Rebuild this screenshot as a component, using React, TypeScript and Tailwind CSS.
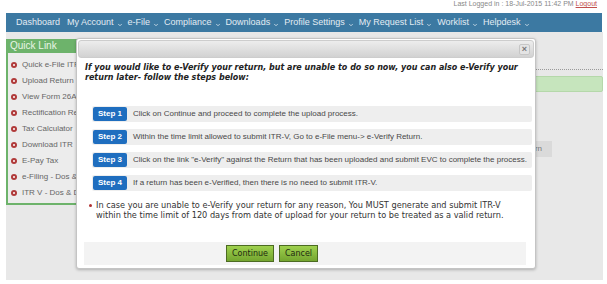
import { ChevronDown } from 'lucide-react'

const menu = ['My Account', 'e-File', 'Compliance', 'Downloads', 'Profile Settings', 'My Request List', 'Worklist', 'Helpdesk']

const links = [
  'Quick e-File ITR',
  'Upload Return',
  'View Form 26AS',
  'Rectification Request',
  'Tax Calculator',
  'Download ITR',
  'E-Pay Tax',
  "e-Filing - Dos & Don'ts",
  "ITR V - Dos & Don'ts",
]

const steps = [
  'Click on Continue and proceed to complete the upload process.',
  'Within the time limit allowed to submit ITR-V, Go to e-File menu-> e-Verify Return.',
  'Click on the link "e-Verify" against the Return that has been uploaded and submit EVC to complete the process.',
  'If a return has been e-Verified, then there is no need to submit ITR-V.',
]

export default function App() {
  return (
    <div className="relative w-[607px] h-[284px] overflow-hidden bg-white font-['Liberation_Sans',Arial,sans-serif]">
      {/* Top strip */}
      <div className="h-[13px] flex justify-end pr-[10px]">
        <div className="text-[7px] leading-[8px] text-[#888]">
          Last Logged in : 18-Jul-2015 11:42 PM <span className="text-[#c0504d] underline">Logout</span>
        </div>
      </div>

      {/* Nav */}
      <div className="ml-[6px] mr-[5px] h-[19px] bg-[#3c79a2] flex items-center pl-[10px] gap-[5px] text-[9px] text-[#e3ecf3]">
        <span className="mr-[2px]">Dashboard</span>
        {menu.map((m) => (
          <span key={m} className="flex items-center gap-[3px]">
            {m}
            <ChevronDown className="w-[6px] h-[6px] mt-[4px]" strokeWidth={3} />
          </span>
        ))}
      </div>

      {/* Page body */}
      <div className="ml-[6px] mr-[4px] h-[248px] bg-[#e8e8e8] flex pt-[7px]">
        {/* Quick links */}
        <div className="w-[150px] h-[166px] bg-[#ececec] border-l-[2px] border-b-[2px] border-[#6db36b]">
          <div className="h-[14px] bg-[#6db36b] text-[10px] leading-[14px] text-[#e8f5e6] pl-[2px]">Quick Link</div>
          <div className="pt-[4px]">
            {links.map((l) => (
              <div key={l} className="h-[16px] flex items-center gap-[3px] pl-[3px] text-[8px] text-[#666]">
                <span className="w-[6px] h-[6px] rounded-full bg-[#b03a3a] flex items-center justify-center">
                  <span className="w-[2px] h-[2px] rounded-full bg-white" />
                </span>
                <span className="ml-[2px]">{l}</span>
              </div>
            ))}
          </div>
        </div>

        {/* Main content (behind dialog) */}
        <div className="flex-1 pl-[10px] pt-[30px]">
          <div className="border-b border-dotted border-[#999]" />
          <div className="mt-[6px] h-[16px] bg-[#c6e5bd] border border-[#b5d8aa] rounded-[2px]" />
          <div className="mt-[49px] flex justify-end pr-[51px]">
            <span className="pl-[8px] pr-[10px] h-[16px] bg-[#dadada] text-[8px] leading-[16px] text-[#777]">Return</span>
          </div>
        </div>
      </div>

      {/* Dialog */}
      <div className="absolute left-[76px] top-[38px] w-[460px] h-[231px] bg-white border border-[#c4c4c4] rounded-[3px] shadow-[0_1px_3px_rgba(0,0,0,0.25)] p-[1px]">
        <div className="h-[18px] rounded-[3px] border border-[#cdcdcd] bg-gradient-to-b from-[#ededed] to-[#d2d2d2] flex items-center justify-end pr-[3px]">
          <span className="w-[11px] h-[11px] border border-[#c6c6c6] rounded-[2px] bg-[#e4e4e4] flex items-center justify-center text-[9px] leading-none text-[#777] font-bold">×</span>
        </div>

        <div className="pl-[7px] pr-[6px] pt-[5px] font-['DejaVu_Sans',Verdana,sans-serif] italic font-bold text-[8px] leading-[10px] text-[#222]">
          If you would like to e-Verify your return, but are unable to do so now, you can also e-Verify your return later- follow the steps below:
        </div>

        <div className="mt-[23px] pl-[14px] pr-[2px] flex flex-col gap-[7px]">
          {steps.map((s, i) => (
            <div key={i} className="h-[16px] bg-[#eeeeee] rounded-[2px] flex items-center pl-[1px]">
              <span className="h-[14px] px-[5px] bg-[#1f6ebf] rounded-[2px] text-white font-bold text-[8px] leading-[14px]">Step {i + 1}</span>
              <span className="ml-[6px] text-[8px] text-[#484848]">{s}</span>
            </div>
          ))}
        </div>

        <div className="mt-[9px] pl-[11px] pr-[20px] flex gap-[4px] font-['DejaVu_Sans',Verdana,sans-serif] text-[8.2px] leading-[10px] text-[#333]">
          <span className="mt-[4px] w-[3px] h-[3px] shrink-0 rounded-full bg-[#b03030]" />
          <p>
            In case you are unable to e-Verify your return for any reason, You MUST generate and submit ITR-V within the time limit of 120 days from date of upload for your return to be treated as a valid return.
          </p>
        </div>

        <div className="mt-[22px] ml-[6px] mr-[8px] h-[23px] bg-[#f3f3f3] flex items-center pl-[142px] gap-[5px] font-['DejaVu_Sans',Verdana,sans-serif] text-[8px] text-[#1e2a10]">
          <span className="h-[17px] px-[5px] leading-[15px] border border-[#4c6b22] bg-gradient-to-b from-[#9fd14e] to-[#74a52f]">Continue</span>
          <span className="h-[17px] px-[5px] leading-[15px] border border-[#4c6b22] bg-gradient-to-b from-[#9fd14e] to-[#74a52f]">Cancel</span>
        </div>
      </div>
    </div>
  )
}
